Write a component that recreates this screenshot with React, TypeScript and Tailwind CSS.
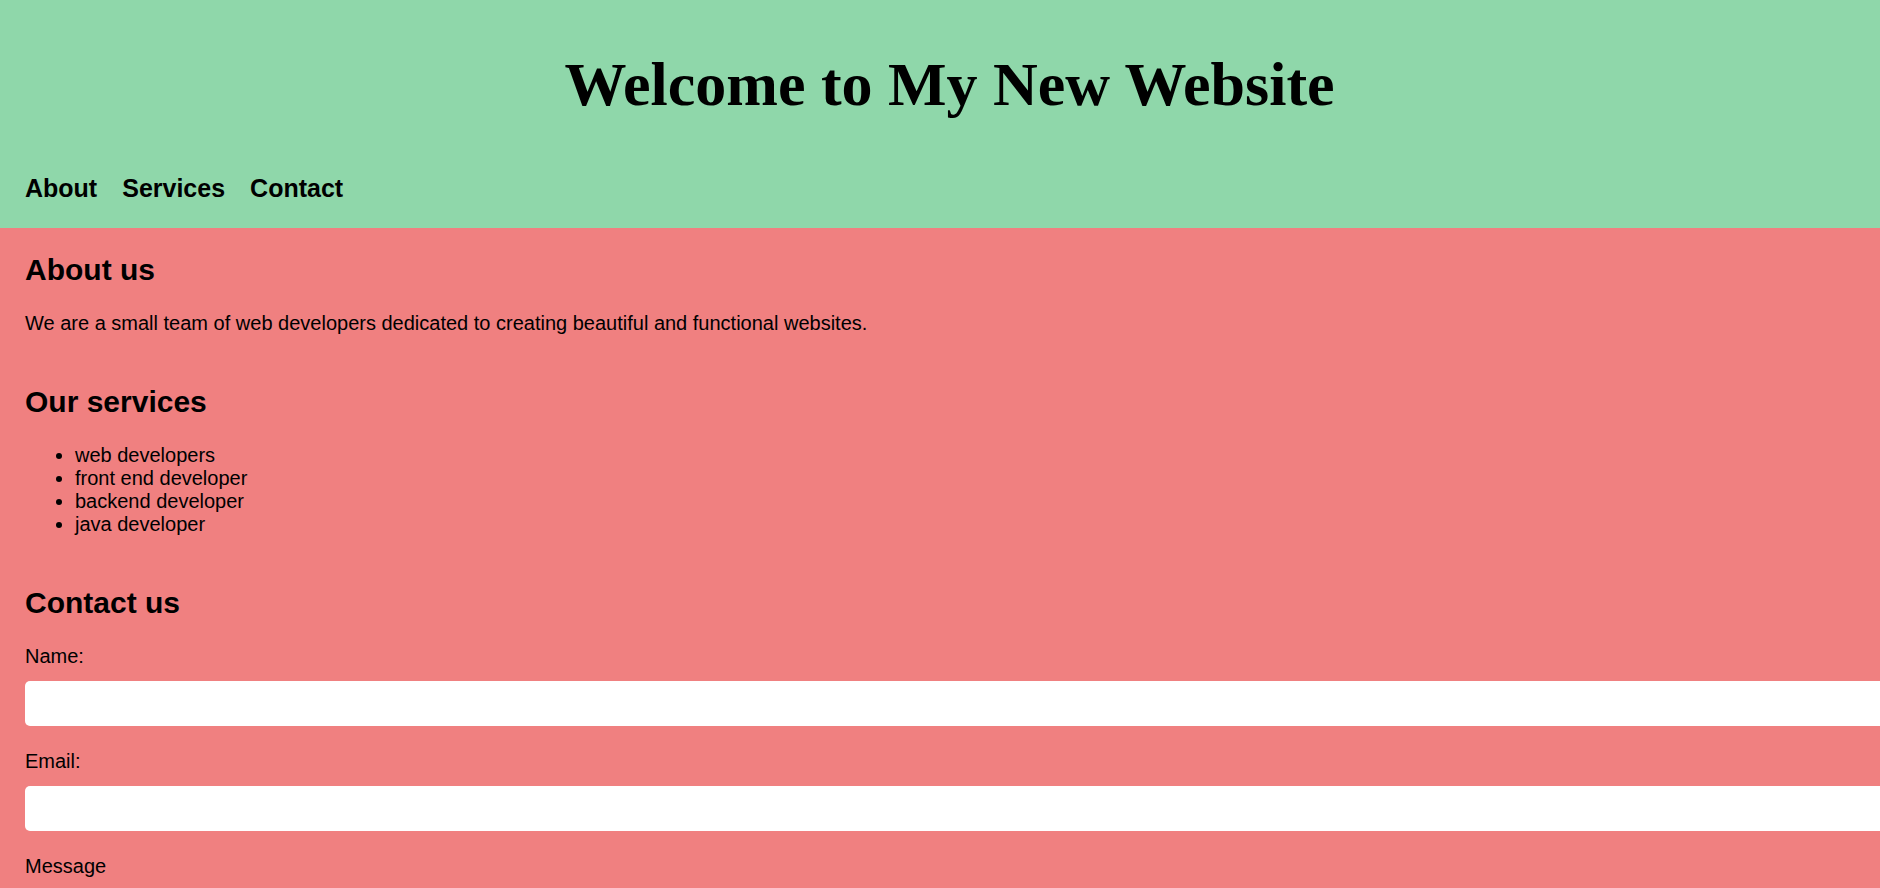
export default function App() {
  const services = ['web developers', 'front end developer', 'backend developer', 'java developer'];

  return (
    <div className="h-screen overflow-hidden bg-[#f08080] text-black font-['Liberation_Sans',Arial,sans-serif]">
      <header className="bg-[#8fd7aa] px-[25px] pt-[49px] pb-[25px]">
        <h1 className="text-center pl-[19px] font-['Liberation_Serif','Times_New_Roman',serif] text-[62px] font-bold leading-[71px] mb-[54px]">
          Welcome to My New Website
        </h1>
        <nav className="flex gap-[25px] text-[25px] font-bold leading-[29px]">
          <a href="#about">About</a>
          <a href="#services">Services</a>
          <a href="#contact">Contact</a>
        </nav>
      </header>

      <main className="pl-[25px] pt-[24px]">
        <section id="about">
          <h2 className="text-[30px] font-bold leading-[35px] mb-[25px]">About us</h2>
          <p className="text-[20px] leading-[23px]">
            We are a small team of web developers dedicated to creating beautiful and functional websites.
          </p>
        </section>

        <section id="services" className="mt-[49px]">
          <h2 className="text-[30px] font-bold leading-[35px] mb-[25px]">Our services</h2>
          <ul className="list-disc pl-[50px] text-[20px] leading-[23px]">
            {services.map((s) => (
              <li key={s}>{s}</li>
            ))}
          </ul>
        </section>

        <section id="contact" className="mt-[49px]">
          <h2 className="text-[30px] font-bold leading-[35px] mb-[25px]">Contact us</h2>
          <form className="text-[20px] leading-[23px]">
            <label htmlFor="name" className="block mb-[13px]">Name:</label>
            <input id="name" type="text" className="block w-[calc(100%+25px)] h-[45px] rounded-[5px] bg-white mb-[24px] outline-none" />
            <label htmlFor="email" className="block mb-[13px]">Email:</label>
            <input id="email" type="email" className="block w-[calc(100%+25px)] h-[45px] rounded-[5px] bg-white mb-[24px] outline-none" />
            <label htmlFor="message" className="block mb-[13px]">Message</label>
            <textarea id="message" className="block w-[calc(100%+25px)] h-[120px] rounded-[5px] bg-white mb-[24px]" />
            <button type="submit" className="px-5 py-2 rounded-[5px] bg-[#8fd7aa]">Send</button>
          </form>
        </section>
      </main>
    </div>
  );
}
